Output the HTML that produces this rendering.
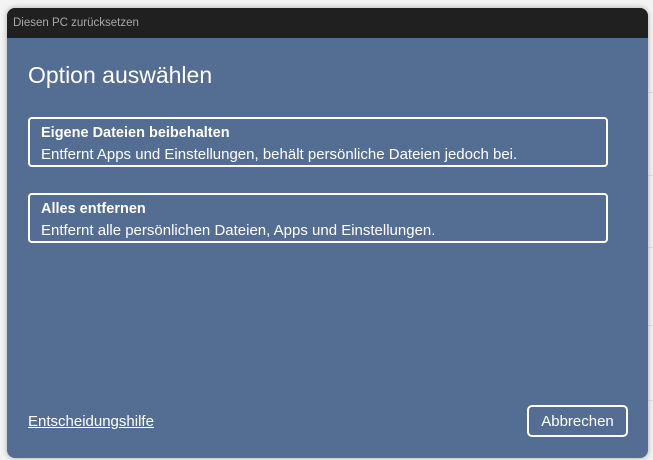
<!DOCTYPE html>
<html><head><meta charset="utf-8"><style>
body{margin:0;width:653px;height:460px;background:#f3f3f3;position:relative;overflow:hidden;font-family:"Liberation Sans","DejaVu Sans",sans-serif}
.ln{position:absolute;left:640px;width:13px;height:1px;background:#e2e2e2}
.win{position:absolute;left:7px;top:8px;width:641px;height:450px;border-radius:8px;overflow:hidden;background:#546d92;box-shadow:0 0 6px rgba(0,0,0,.3)}
.tb{height:30px;background:#202020;color:#a8a8a8;font-size:11.5px;line-height:30px;padding-left:6px}
h1{position:absolute;left:21px;top:54px;margin:0;font-weight:normal;font-size:23px;color:#fff}
.card{position:absolute;left:21px;width:576px;height:46px;border:2px solid #fff;border-radius:4px;color:#fff;font-size:15px;box-sizing:content-box}
.card b{display:block;position:absolute;left:11px;top:6px;font-size:14.5px}
.card span{position:absolute;left:11px;top:27px}
.link{position:absolute;left:21px;top:405px;color:#fff;font-size:15px;text-decoration:underline}
.btn{position:absolute;left:520px;top:397px;width:97px;height:28px;border:2px solid #fff;border-radius:5px;color:#fff;font-size:15px;text-align:center;line-height:29px}
</style></head><body>
<div class="ln" style="top:92px"></div><div class="ln" style="top:175px"></div><div class="ln" style="top:247px"></div><div class="ln" style="top:325px"></div><div class="ln" style="top:400px"></div>
<div class="win">
<div class="tb">Diesen PC zurücksetzen</div>
<h1>Option auswählen</h1>
<div class="card" style="top:109px"><b>Eigene Dateien beibehalten</b><span>Entfernt Apps und Einstellungen, behält persönliche Dateien jedoch bei.</span></div>
<div class="card" style="top:185px"><b>Alles entfernen</b><span>Entfernt alle persönlichen Dateien, Apps und Einstellungen.</span></div>
<div class="link">Entscheidungshilfe</div>
<div class="btn">Abbrechen</div>
</div>
</body></html>
